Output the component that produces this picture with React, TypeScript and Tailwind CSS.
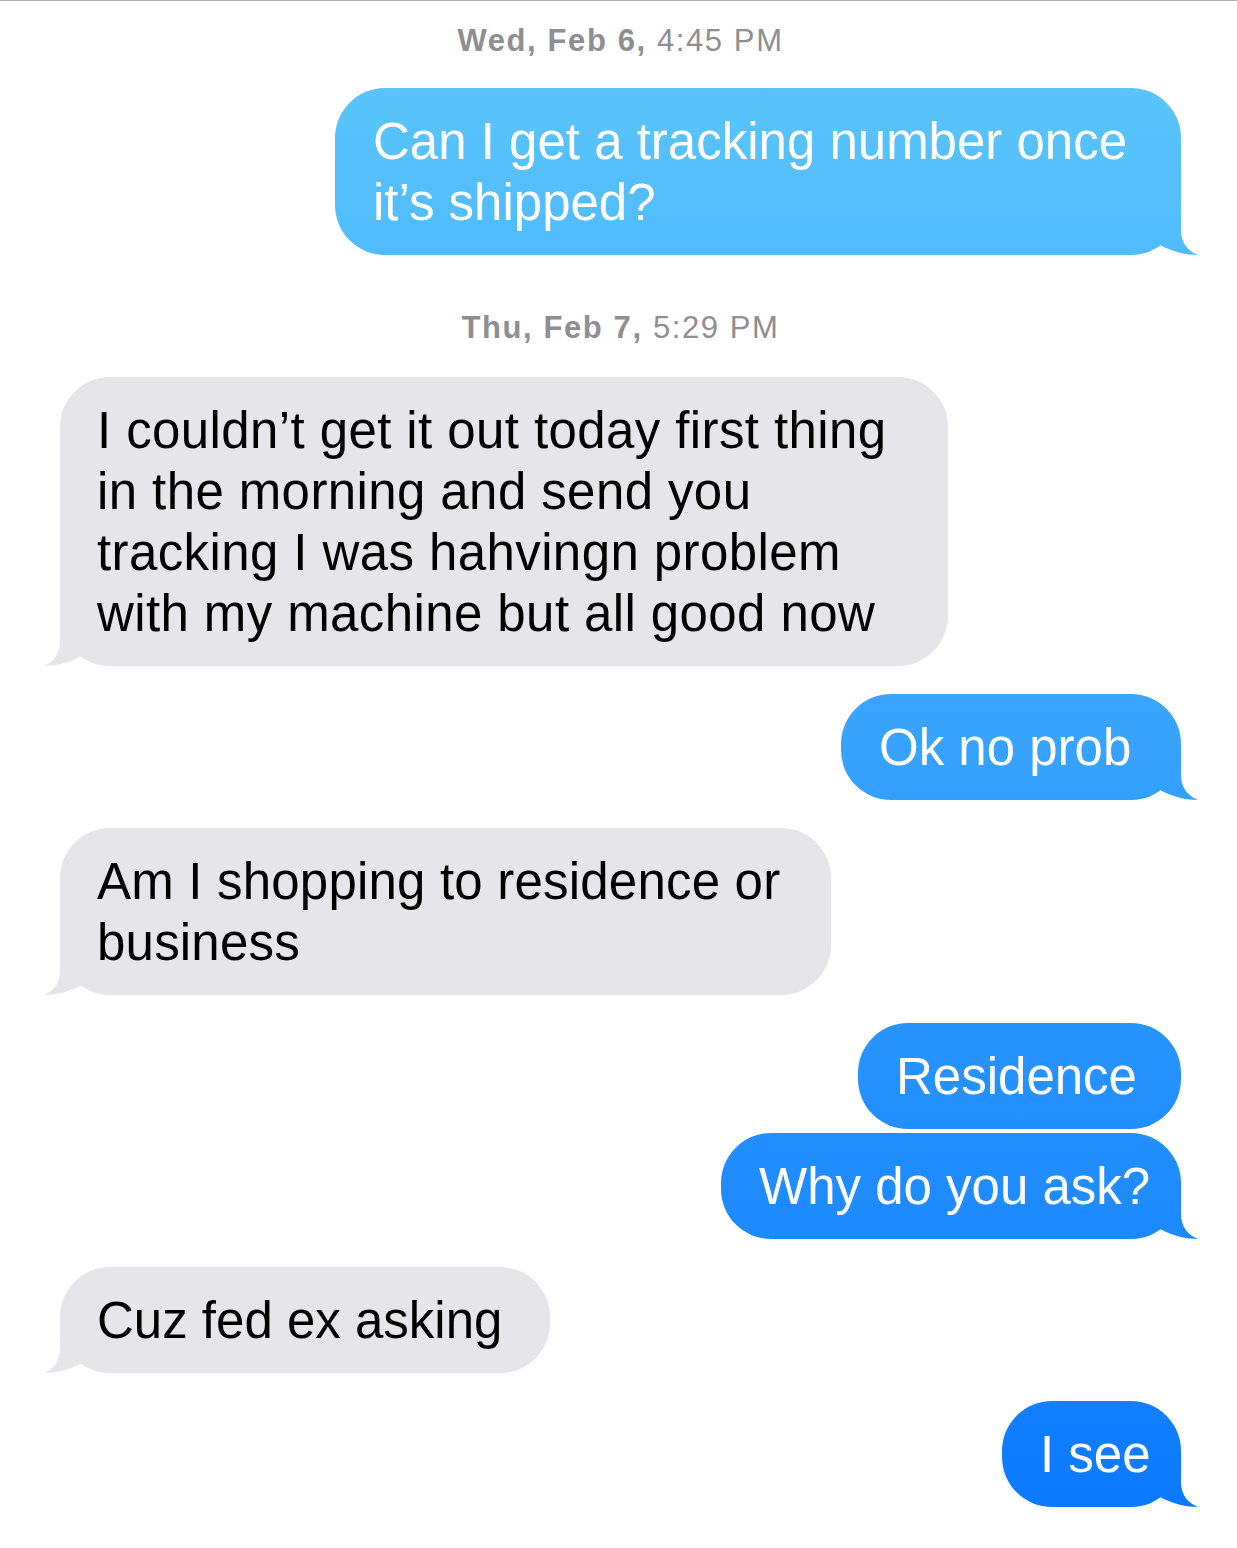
import React from "react";

const blue = "bg-fixed bg-linear-to-b from-[#5ec8fa] to-[#0877ff]";

// outgoing message (right side, blue)
const Sent = ({ w, tail, className = "", children }: any) => (
  <div className={`relative self-end ${w} ${className}`}>
    <div className={`relative z-10 rounded-[50px] ${blue} py-[22.5px] pl-[38px] text-white whitespace-nowrap`}>
      {children}
    </div>
    {tail && (
      <div
        className={`absolute bottom-0 right-[-17px] h-[50px] w-[67px] ${blue} [clip-path:path('M20_0H50V25C50_38,57_46,67_50C56_50,42_47,29_40Z')]`}
      />
    )}
  </div>
);

// incoming message (left side, gray)
const Received = ({ w, className = "", tracking = "", children }: any) => (
  <div className={`relative self-start ${w} ${className}`}>
    <div className={`relative z-10 rounded-[50px] bg-[#e5e5ea] py-[22.5px] pl-[37px] text-black whitespace-nowrap ${tracking}`}>
      {children}
    </div>
    <div className="absolute bottom-0 left-[-16px] h-[50px] w-[67px] bg-[#e5e5ea] [clip-path:path('M47_0H16V25C16_38,10_46,0_50C11_50,25_47,38_40Z')]" />
  </div>
);

const Stamp = ({ day, time, className = "" }: any) => (
  <div className={`self-center h-[40px] leading-[40px] text-[31px] tracking-[1.6px] text-[#8e8e93] ${className}`}>
    <span className="font-bold">{day}</span> {time}
  </div>
);

export default function App() {
  return (
    <div className="w-[1237px] h-[1548px] bg-white border-t border-[#b0b0b0] font-['Liberation_Sans',Arial,sans-serif] text-[51px] leading-[61px]">
      <div className="flex flex-col pl-[60px] pr-[56px]">
        <Stamp day="Wed, Feb 6," time="4:45 PM" className="mt-[20px]" />
        <Sent w="w-[846px]" tail className="mt-[27px]">
          <div>Can I get a tracking number once</div>
          <div>it’s shipped?</div>
        </Sent>

        <Stamp day="Thu, Feb 7," time="5:29 PM" className="mt-[53px]" />
        <Received w="w-[888px]" tracking="tracking-[0.4px]" className="mt-[29px]">
          <div>I couldn’t get it out today first thing</div>
          <div>in the morning and send you</div>
          <div>tracking I was hahvingn problem</div>
          <div>with my machine but all good now</div>
        </Received>

        <Sent w="w-[340px]" tail className="mt-[28px]">
          Ok no prob
        </Sent>

        <Received w="w-[771px]" tracking="tracking-[0.2px]" className="mt-[28px]">
          <div>Am I shopping to residence or</div>
          <div>business</div>
        </Received>

        <Sent w="w-[323px]" className="mt-[28px]">
          Residence
        </Sent>
        <Sent w="w-[460px]" tail className="mt-[4px]">
          Why do you ask?
        </Sent>

        <Received w="w-[490px]" className="mt-[28px]">
          Cuz fed ex asking
        </Received>

        <Sent w="w-[179px]" tail className="mt-[28px]">
          I see
        </Sent>
      </div>
    </div>
  );
}
